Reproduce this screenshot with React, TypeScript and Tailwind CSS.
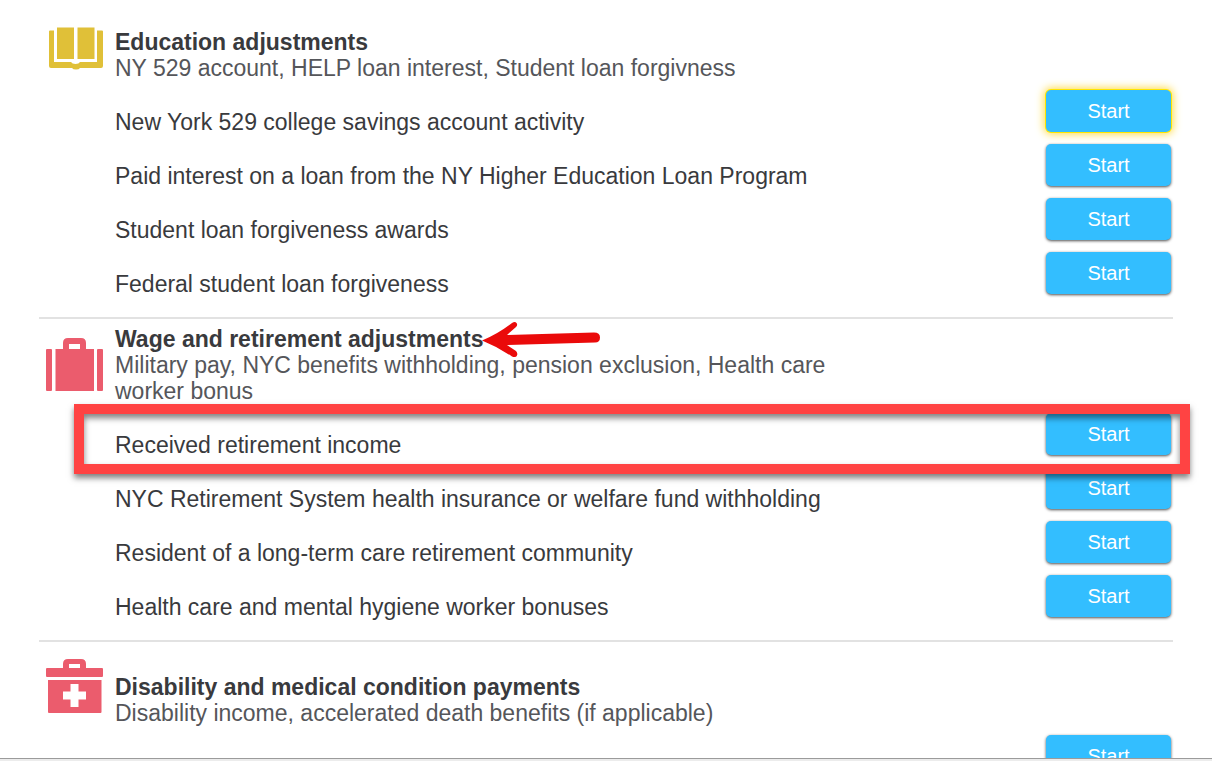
import type { ReactNode } from 'react';

type Item = { label: string; focused?: boolean; highlighted?: boolean };

type Section = {
  title: string;
  summary: string;
  icon: ReactNode;
  iconSpace: string;
  textSpace: string;
  arrow?: boolean;
  items: Item[];
};

const BookIcon = () => (
  <svg width="58" height="56" viewBox="0 0 58 56" fill="#e0c038" aria-hidden="true">
    <path d="M11 0.500h17V32H11zM31.500 0.500h17V32h-17z" />
    <path d="M4 3.500H8V35h17q1 2 4.500 2T34 35h17V3.500h5q1 0 1 1V39q0 2-2 2H34q-1 1.500-4 1.500T26 41H5q-2 0-2-2V4.500q0-1 1-1z" />
  </svg>
);

const SuitcaseIcon = () => (
  <svg width="58" height="56" viewBox="0 0 58 56" fill="#eb5c6d" aria-hidden="true">
    <rect x="0" y="11" width="6" height="42" rx="1" />
    <rect x="51" y="11" width="6" height="42" rx="1" />
    <path fillRule="evenodd" d="M9.500 11H17V5q0-5 5-5h13q5 0 5 5v6h8v42H9.500zM23 6v5h11V6z" />
  </svg>
);

const MedicalIcon = () => (
  <svg width="58" height="56" viewBox="0 0 58 56" fill="#eb5c6d" aria-hidden="true">
    <path fillRule="evenodd" d="M1 9h16V5q0-5 5-5h13q5 0 5 5v4h16q1 0 1 1v7q0 1-1 1H1q-1 0-1-1v-7q0-1 1-1zM23 5v4h11V5z" />
    <path fillRule="evenodd" d="M2 21h53.500v32q0 1-1 1H3q-1 0-1-1zM24.500 25v7.500H17v8h7.500V48h8v-7.500H40v-8h-7.500V25z" />
  </svg>
);

const ArrowMark = () => (
  <svg className="absolute left-full top-1/2 -ml-1 -translate-y-1/2" width="124" height="40" viewBox="0 0 124 40" fill="none" aria-hidden="true">
    <path d="M2 21.500Q18 15 32 4Q35 2 36.500 4T36 8L27 16L114 13.500Q120 13.500 120 18.500T115 23.500L27 26L36 32Q38 34 37 36.500T32 37.500Q18 28 2 21.500z" fill="#ea0a0a" />
  </svg>
);

const sections: Section[] = [
  {
    title: 'Education adjustments',
    summary: 'NY 529 account, HELP loan interest, Student loan forgivness',
    icon: <BookIcon />,
    iconSpace: 'pt-[27px]',
    textSpace: 'pt-[29px]',
    items: [
      { label: 'New York 529 college savings account activity', focused: true },
      { label: 'Paid interest on a loan from the NY Higher Education Loan Program' },
      { label: 'Student loan forgiveness awards' },
      { label: 'Federal student loan forgiveness' },
    ],
  },
  {
    title: 'Wage and retirement adjustments',
    summary: 'Military pay, NYC benefits withholding, pension exclusion, Health care worker bonus',
    icon: <SuitcaseIcon />,
    iconSpace: 'pt-[19px]',
    textSpace: 'pt-[7px]',
    arrow: true,
    items: [
      { label: 'Received retirement income', highlighted: true },
      { label: 'NYC Retirement System health insurance or welfare fund withholding' },
      { label: 'Resident of a long-term care retirement community' },
      { label: 'Health care and mental hygiene worker bonuses' },
    ],
  },
  {
    title: 'Disability and medical condition payments',
    summary: 'Disability income, accelerated death benefits (if applicable)',
    icon: <MedicalIcon />,
    iconSpace: 'pt-[17px]',
    textSpace: 'pt-8',
    items: [{ label: '' }],
  },
];

function ItemRow({ item }: { item: Item }) {
  return (
    <li className="relative flex h-[54px] items-end justify-between gap-4 pr-[2px]">
      <span>{item.label}</span>
      <button
        type="button"
        className={`mb-[3px] h-[42px] w-[125px] shrink-0 rounded-[5px] bg-[#33beff] text-[20px] leading-[42px] text-white ${
          item.focused
            ? 'shadow-[0_0_0_1px_#ffe600,0_0_8px_2px_#ffd93d]'
            : 'shadow-[0_1px_3px_rgba(0,0,0,0.7)]'
        }`}
      >
        Start
      </button>
      {item.highlighted && (
        <div className="pointer-events-none absolute -left-[41px] -right-[17px] top-0 z-10 h-[70px] border-[10px] border-[#ff4343] shadow-[0_4px_6px_rgba(0,0,0,0.5),inset_0_4px_6px_rgba(0,0,0,0.5)]" />
      )}
    </li>
  );
}

export default function App() {
  return (
    <div className="flex h-screen flex-col bg-white font-['Liberation_Sans',Arial,sans-serif] text-[23px] leading-[26px] text-[#393a3d]">
      <main className="min-h-0 flex-1 overflow-hidden px-[39px]">
        {sections.map((section) => (
          <section key={section.title} className="flex border-b-2 border-[#e2e2e2] pb-5 last:border-b-0">
            <div className={`w-[76px] shrink-0 pl-[7px] ${section.iconSpace}`}>{section.icon}</div>
            <div className={`min-w-0 flex-1 ${section.textSpace}`}>
              <h2 className="relative w-fit font-bold">
                {section.title}
                {section.arrow && <ArrowMark />}
              </h2>
              <p className="max-w-[720px] text-[#55565a]">{section.summary}</p>
              <ul>
                {section.items.map((item) => (
                  <ItemRow key={item.label} item={item} />
                ))}
              </ul>
            </div>
          </section>
        ))}
      </main>
      <div className="h-[3px] shrink-0 border-t border-[#9b9b9b] bg-[#ececec]" />
    </div>
  );
}
